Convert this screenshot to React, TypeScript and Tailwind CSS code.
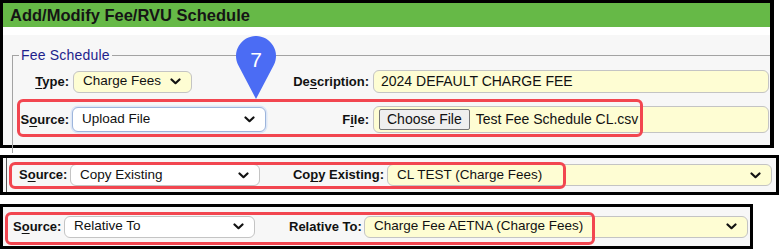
import React from "react";

const font = "font-['Liberation_Sans',Arial,sans-serif]";

function Chevron() {
  return (
    <svg width="11" height="7" viewBox="0 0 11 7" className="shrink-0">
      <path d="M1.5 1.5 L5.5 5.2 L9.5 1.5" fill="none" stroke="#111" strokeWidth="2.2" strokeLinecap="round" strokeLinejoin="round" />
    </svg>
  );
}

function Label({ pre, u, post, w }: { pre: string; u?: string; post?: string; w: string }) {
  return (
    <div className={`${w} shrink-0 whitespace-nowrap text-right text-[13px] font-bold text-[#111]`}>
      {pre}
      {u && <span className="underline underline-offset-2">{u}</span>}
      {post}
    </div>
  );
}

function Select({ value, w, yellow, focus, h = "h-[22px]" }: { value: string; w: string; yellow?: boolean; focus?: boolean; h?: string }) {
  const bg = yellow ? "bg-[#fefdd3]" : "bg-white";
  const border = focus ? "border-[#9db5dc] shadow-[0_0_0_1.5px_#dde7f7]" : "border-[#c4c4c4]";
  return (
    <div className={`${w} ${h} ${bg} ${border} flex shrink-0 items-center justify-between rounded-[6px] border pl-[9px] pr-[10px] text-[13.5px] text-[#111]`}>
      <span className="whitespace-nowrap">{value}</span>
      <Chevron />
    </div>
  );
}

export default function App() {
  return (
    <div className={`${font} h-[251px] w-[780px] bg-white`}>
      {/* panel 1 */}
      <div className="relative h-[148px] w-[774px] border-[3px] border-r-[4px] border-black bg-[#f7f7f7]">
        <div className="flex h-[24px] items-center bg-[#66b947] pl-[7px] text-[16.5px] font-bold text-[#151515] shadow-[0_2px_3px_rgba(0,0,0,0.25)]">
          Add/Modify Fee/RVU Schedule
        </div>
        <div className="h-[8px] bg-white" />
        <fieldset className="ml-[9px] mt-[10px] border-l border-t border-[#a3a3a3] pb-[20px]">
          <legend className="ml-[6px] px-[2px] text-[14px] tracking-[0.2px] text-[#1f1f8c]">Fee Schedule</legend>
          <div className="mt-[4px] flex items-center">
            <Label pre="" u="T" post="ype:" w="w-[56px]" />
            <div className="ml-[4px] w-[219px]">
              <Select value="Charge Fees" w="w-[119px]" yellow />
            </div>
            <Label pre="De" u="s" post="cription:" w="w-[77px]" />
            <div className="ml-[4px] flex h-[23px] w-[396px] items-center rounded-[6px] border border-[#c4c4c4] bg-[#fefdd3] pl-[7px] text-[14px] text-[#111]">
              2024 DEFAULT CHARGE FEE
            </div>
          </div>
          <div className="mt-[13px] flex items-center">
            <Label pre="S" u="o" post="urce:" w="w-[56px]" />
            <div className="ml-[3px] w-[220px]">
              <Select value="Upload File" w="w-[194px]" focus h="h-[25px]" />
            </div>
            <Label pre="F" u="i" post="le:" w="w-[77px]" />
            <div className="ml-[4px] flex h-[27px] w-[396px] items-center rounded-[6px] border border-[#c4c4c4] bg-[#fefdd3] pl-[5px] text-[14px] text-[#111]">
              <span className="flex h-[21px] items-center rounded-[2px] border border-[#767676] bg-[#efefef] px-[7px]">Choose File</span>
              <span className="ml-[6px]">Test Fee Schedule CL.csv</span>
            </div>
          </div>
        </fieldset>
        {/* annotation overlays */}
        <div className="pointer-events-none absolute left-[14px] top-[96px] h-[38px] w-[626px] rounded-[6px] border-[3px] border-[#f24650]" />
        <div className="absolute left-[233px] top-[33px] h-[64px] w-[40px]">
          <svg width="40" height="64" viewBox="0 0 40 64">
            <path d="M20 63 L2.3 29.3 A20 20 0 1 1 37.7 29.3 Z" fill="#4b6cf4" />
          </svg>
          <span className="absolute left-0 top-[8px] w-[40px] text-center text-[21px] text-white">7</span>
        </div>
      </div>

      {/* panel 2 */}
      <div className="relative mt-[7px] h-[40px] w-[779px] border-[3px] border-black bg-[#f7f7f7]">
        <div className="ml-[3px] flex h-full items-center border-l border-[#555]">
          <div className="flex items-center pl-[12px]">
            <Label pre="S" u="o" post="urce:" w="w-[47px]" />
            <div className="ml-[4px] w-[222px]">
              <Select value="Copy Existing" w="w-[190px]" />
            </div>
            <Label pre="Co" u="p" post="y Existing:" w="w-[92px]" />
            <div className="ml-[3px]">
              <Select value="CL TEST (Charge Fees)" w="w-[385px]" yellow />
            </div>
          </div>
        </div>
        <div className="pointer-events-none absolute left-[6px] top-[4px] h-[27px] w-[557px] rounded-[6px] border-[3px] border-[#f24650]" />
      </div>

      {/* panel 3 */}
      <div className="relative mt-[9px] h-[45px] w-[753px] border-[3px] border-black bg-[#f7f7f7]">
        <div className="flex h-full items-center pl-[10px]">
          <Label pre="S" u="o" post="urce:" w="w-[47px]" />
          <div className="ml-[4px] w-[225px]">
            <Select value="Relative To" w="w-[191px]" />
          </div>
          <Label pre="Relative To" post=":" w="w-[72px]" />
          <div className="ml-[3px]">
            <Select value="Charge Fee AETNA (Charge Fees)" w="w-[384px]" yellow />
          </div>
        </div>
        <div className="pointer-events-none absolute left-[2px] top-[5px] h-[33px] w-[590px] rounded-[6px] border-[3px] border-[#f24650]" />
      </div>
    </div>
  );
}
